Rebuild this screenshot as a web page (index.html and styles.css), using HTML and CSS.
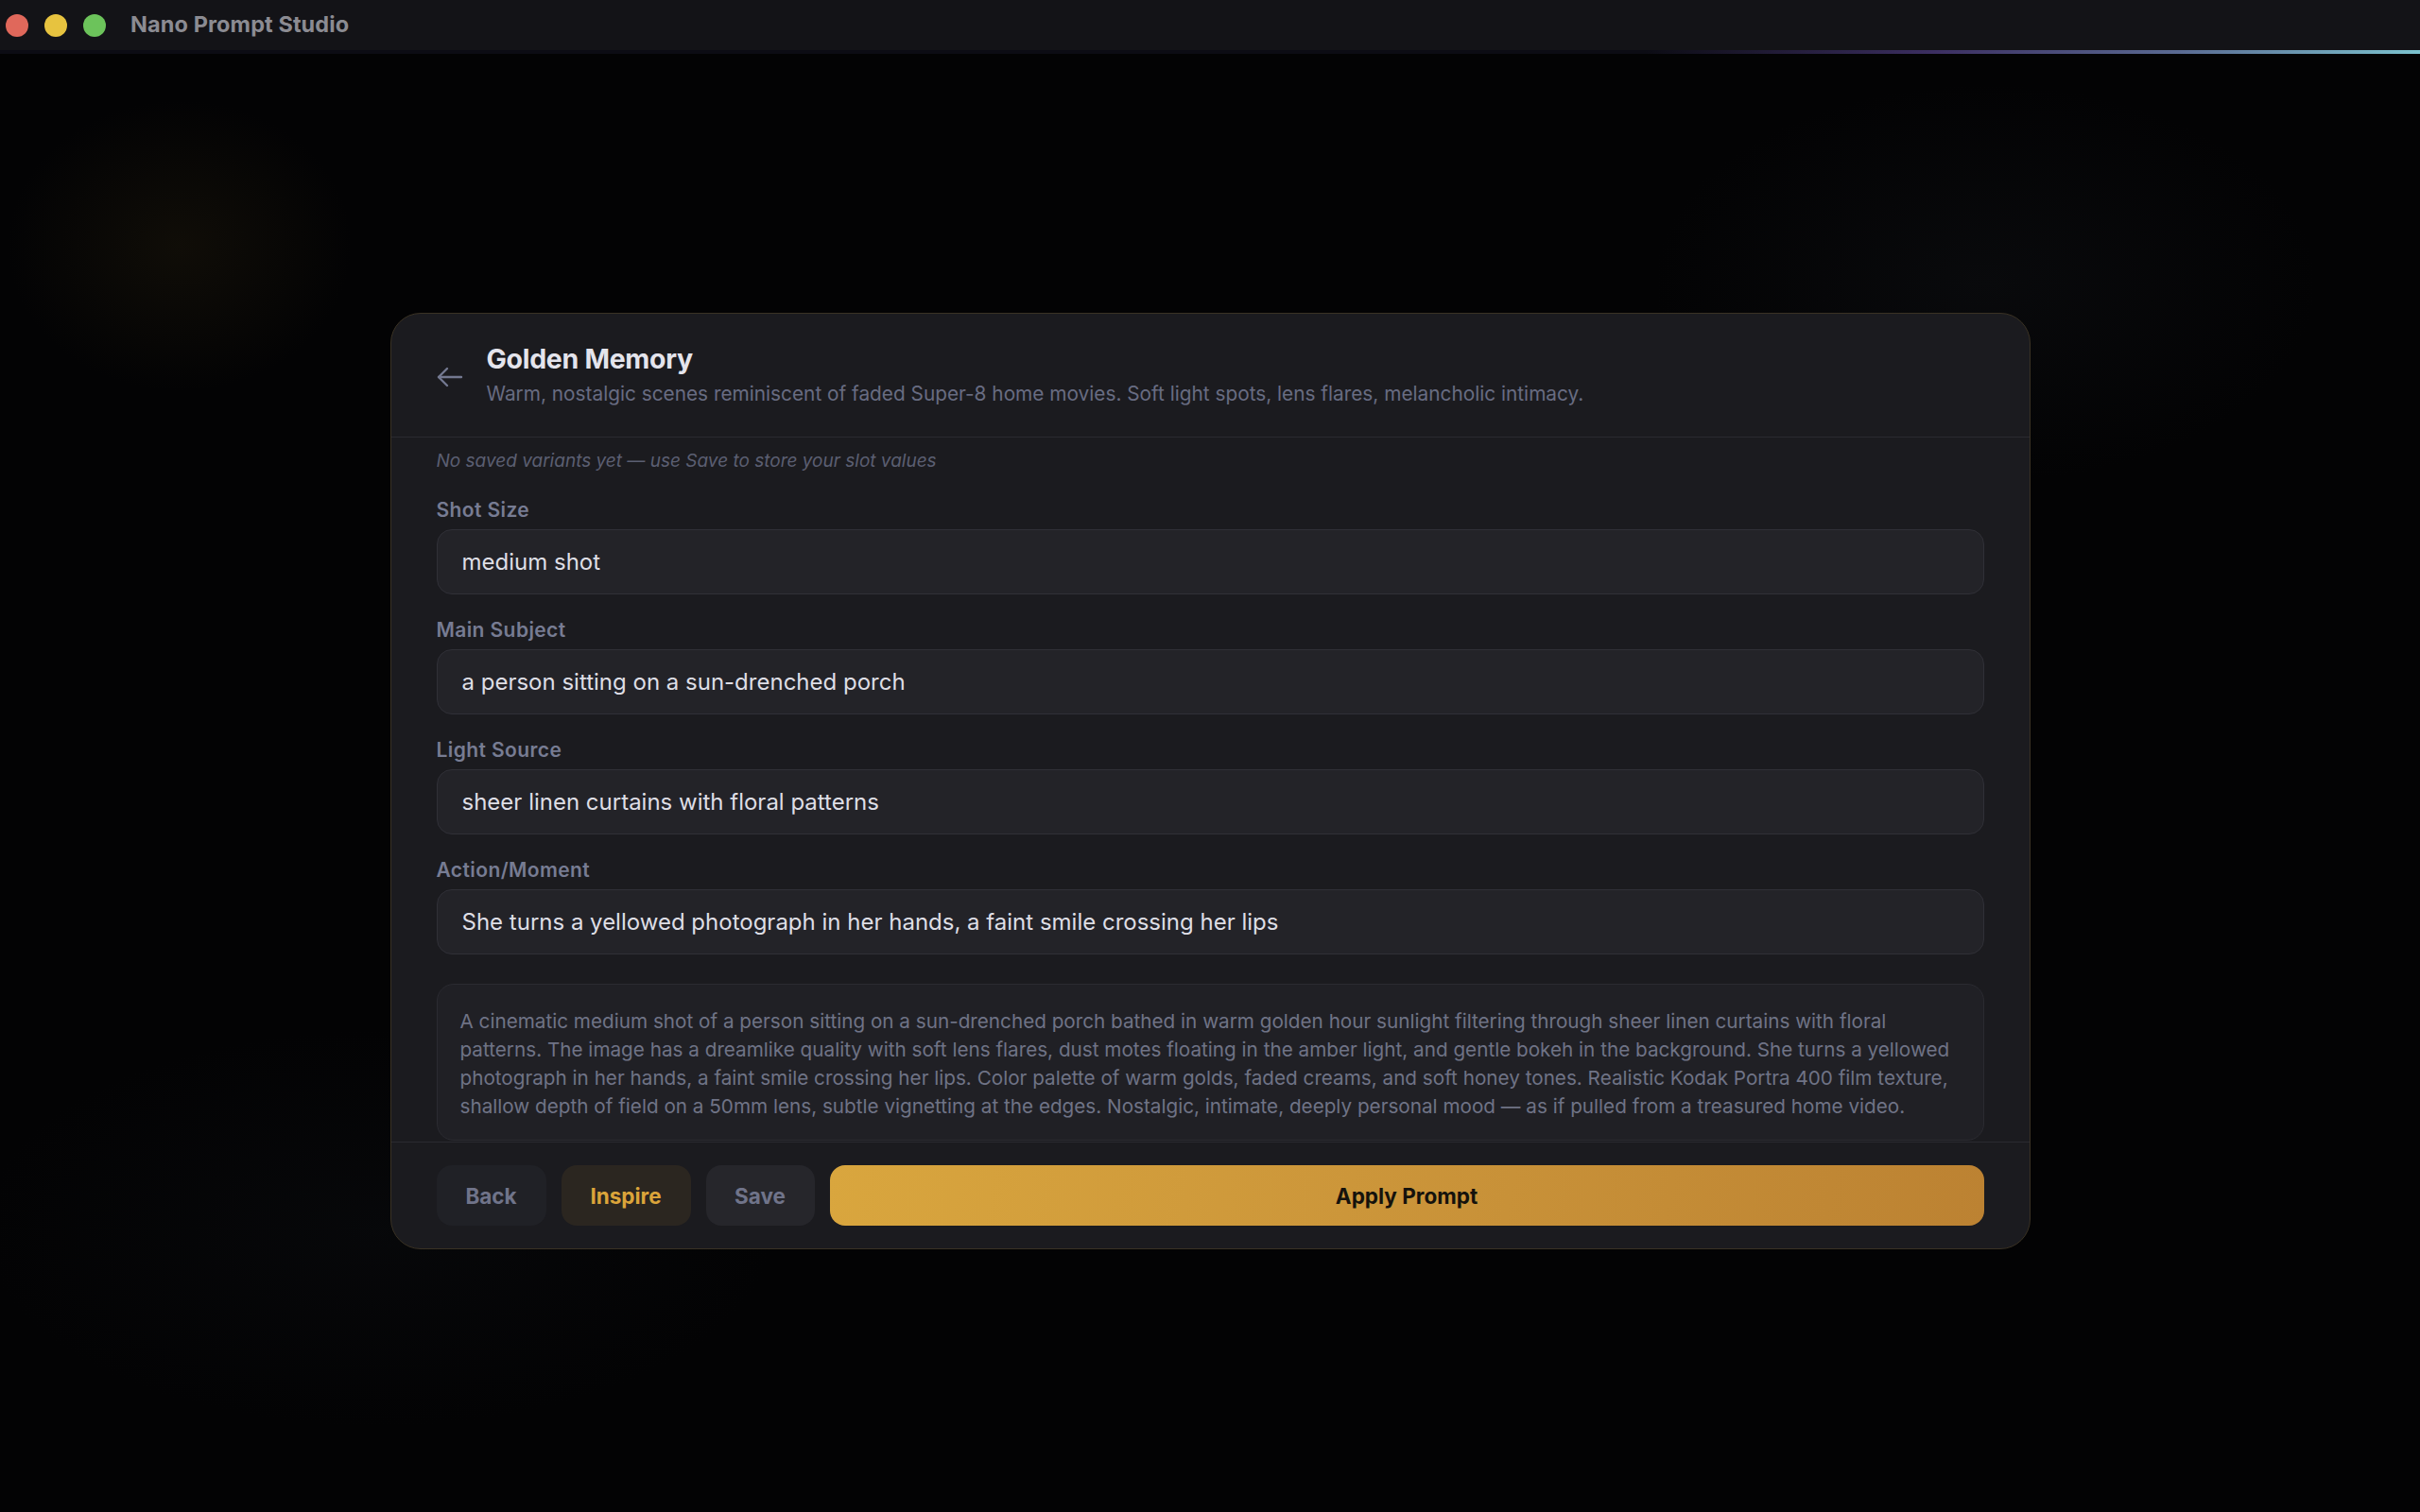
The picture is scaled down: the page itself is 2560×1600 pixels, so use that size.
FILE: index.html
```html
<!DOCTYPE html>
<html lang="en">
<head>
<meta charset="utf-8">
<title>Nano Prompt Studio</title>
<link rel="stylesheet" href="styles.css">
</head>
<body>
<div class="app">
  <header class="titlebar">
    <div class="lights">
      <span class="light red"></span>
      <span class="light yellow"></span>
      <span class="light green"></span>
    </div>
    <div class="app-title">Nano Prompt Studio</div>
  </header>
  <div class="titleline"></div>
  <main class="stage">
    <section class="modal">
      <div class="modal-head">
        <button class="back-icon" aria-label="Back">
          <svg width="28" height="22" viewBox="0 0 28 22" fill="none" stroke="currentColor" stroke-width="2.4" stroke-linecap="round" stroke-linejoin="round"><line x1="26" y1="11" x2="2" y2="11"/><polyline points="11 2 2 11 11 20"/></svg>
        </button>
        <div class="head-text">
          <h1 class="title">Golden Memory</h1>
          <p class="subtitle">Warm, nostalgic scenes reminiscent of faded Super-8 home movies. Soft light spots, lens flares, melancholic intimacy.</p>
        </div>
      </div>
      <div class="modal-body">
        <p class="variants">No saved variants yet — use Save to store your slot values</p>
        <div class="fields">
          <div class="field">
            <label class="label">Shot Size</label>
            <div class="input">medium shot</div>
          </div>
          <div class="field">
            <label class="label">Main Subject</label>
            <div class="input">a person sitting on a sun-drenched porch</div>
          </div>
          <div class="field">
            <label class="label">Light Source</label>
            <div class="input">sheer linen curtains with floral patterns</div>
          </div>
          <div class="field">
            <label class="label">Action/Moment</label>
            <div class="input">She turns a yellowed photograph in her hands, a faint smile crossing her lips</div>
          </div>
        </div>
        <div class="preview">A cinematic medium shot of a person sitting on a sun-drenched porch bathed in warm golden hour sunlight filtering through sheer linen curtains with floral patterns. The image has a dreamlike quality with soft lens flares, dust motes floating in the amber light, and gentle bokeh in the background. She turns a yellowed photograph in her hands, a faint smile crossing her lips. Color palette of warm golds, faded creams, and soft honey tones. Realistic Kodak Portra 400 film texture, shallow depth of field on a 50mm lens, subtle vignetting at the edges. Nostalgic, intimate, deeply personal mood — as if pulled from a treasured home video.</div>
      </div>
      <div class="modal-foot">
        <button class="btn btn-back">Back</button>
        <button class="btn btn-inspire">Inspire</button>
        <button class="btn btn-save">Save</button>
        <button class="btn btn-apply">Apply Prompt</button>
      </div>
    </section>
  </main>
</div>
</body>
</html>
```

FILE: styles.css
```css
* { box-sizing: border-box; }
html, body { margin: 0; padding: 0; }
body {
  width: 2560px;
  height: 1600px;
  overflow: hidden;
  background: #030304;
  font-family: Inter, "Noto Sans", sans-serif;
  color: #e2e2e8;
}
.app {
  width: 100%;
  height: 100%;
  display: flex;
  flex-direction: column;
  background:
    radial-gradient(ellipse 260px 220px at 190px 260px, rgba(40, 32, 14, 0.35), transparent 70%),
    radial-gradient(ellipse 500px 300px at 2100px 300px, rgba(18, 20, 24, 0.4), transparent 70%),
    radial-gradient(ellipse 600px 300px at 400px 1300px, rgba(14, 16, 20, 0.35), transparent 70%),
    #030304;
}
.titlebar {
  height: 53px;
  flex: none;
  display: flex;
  align-items: center;
  background: #131317;
  padding-left: 6px;
}
.lights { display: flex; gap: 17px; align-items: center; }
.light { width: 24px; height: 24px; border-radius: 50%; display: block; }
.red { background: #e0685b; }
.yellow { background: #e7c33f; }
.green { background: #6cc35b; }
.app-title {
  margin-left: 26px;
  margin-top: -2px;
  font-size: 23.5px;
  font-weight: 700;
  color: #8b8b92;
  letter-spacing: 0.1px;
}
.titleline {
  height: 4px;
  flex: none;
  background: linear-gradient(90deg, #0c0c14 0%, #0c0c14 68%, #3c2f62 80%, #5a6a92 90%, #7cc3cf 100%);
}
.stage {
  flex: 1;
  display: flex;
  align-items: center;
  justify-content: center;
  padding-bottom: 4px;
}
.modal {
  width: 1735px;
  height: 991px;
  background: #1b1b1f;
  border: 1px solid #3a3224;
  border-radius: 32px;
  display: flex;
  flex-direction: column;
  overflow: hidden;
}
.modal-head {
  flex: none;
  height: 131px;
  display: flex;
  align-items: center;
  padding: 0 48px;
  gap: 25px;
  border-bottom: 1px solid #2a2a30;
}
.back-icon {
  background: none;
  border: 0;
  padding: 0;
  color: #737890;
  display: flex;
  align-items: center;
  margin-top: 4px;
}
.head-text { display: flex; flex-direction: column; gap: 6px; }
.title {
  margin: 0;
  font-size: 28.5px;
  line-height: 34px;
  font-weight: 700;
  color: #e4e4ec;
  letter-spacing: -0.3px;
}
.subtitle {
  margin: 0;
  font-size: 20.8px;
  line-height: 28px;
  color: #686c82;
}
.modal-body {
  flex: 1;
  overflow: hidden;
  padding: 13px 48px 0;
}
.variants {
  margin: 0 0 27px;
  font-size: 19px;
  line-height: 24px;
  font-style: italic;
  color: #5b5f72;
}
.fields { display: flex; flex-direction: column; gap: 25px; }
.field { display: flex; flex-direction: column; gap: 7px; }
.label {
  font-size: 21px;
  line-height: 26px;
  font-weight: 600;
  color: #777c93;
  letter-spacing: 0.4px;
}
.input {
  height: 69px;
  display: flex;
  align-items: center;
  padding: 0 26px;
  background: #232328;
  border: 1px solid #303037;
  border-radius: 16px;
  font-size: 24px;
  color: #dedee5;
}
.preview {
  margin-top: 31px;
  padding: 24px 14px 20px 24px;
  background: #202025;
  border: 1px solid #2b2b31;
  border-radius: 18px;
  font-size: 20.7px;
  line-height: 30px;
  color: #6f7386;
}
.modal-foot {
  flex: none;
  display: flex;
  gap: 16px;
  padding: 24px 48px;
  border-top: 1px solid #2a2a30;
}
.btn {
  height: 64px;
  border: 0;
  border-radius: 16px;
  font-family: inherit;
  font-size: 22.5px;
  font-weight: 700;
  padding: 0;
}
.btn-back { width: 116px; background: #202126; color: #70748a; }
.btn-inspire { width: 137px; background: #2b2620; color: #dba43a; }
.btn-save { width: 115px; background: #26262b; color: #70748a; }
.btn-apply {
  flex: 1;
  background: linear-gradient(100deg, #d9a63e 0%, #cc963a 45%, #bc8232 100%);
  color: #15120c;
}
```
